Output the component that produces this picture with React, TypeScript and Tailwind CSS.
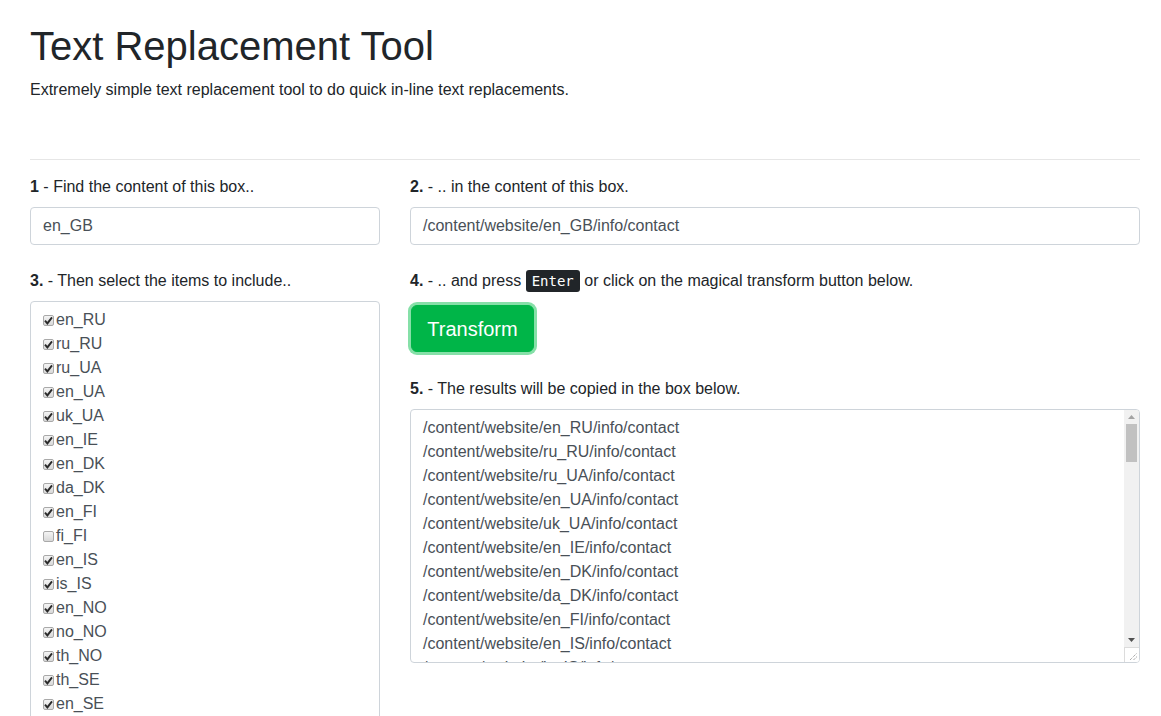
import React from "react";

const locales: { code: string; checked: boolean }[] = [
  { code: "en_RU", checked: true },
  { code: "ru_RU", checked: true },
  { code: "ru_UA", checked: true },
  { code: "en_UA", checked: true },
  { code: "uk_UA", checked: true },
  { code: "en_IE", checked: true },
  { code: "en_DK", checked: true },
  { code: "da_DK", checked: true },
  { code: "en_FI", checked: true },
  { code: "fi_FI", checked: false },
  { code: "en_IS", checked: true },
  { code: "is_IS", checked: true },
  { code: "en_NO", checked: true },
  { code: "no_NO", checked: true },
  { code: "th_NO", checked: true },
  { code: "th_SE", checked: true },
  { code: "en_SE", checked: true },
  { code: "sv_SE", checked: true },
];

const template = "/content/website/en_GB/info/contact";

function Check({ on }: { on: boolean }) {
  return (
    <span className="mr-[2px] inline-flex h-[11px] w-[11px] shrink-0 items-center justify-center rounded-[2px] border border-[#a9a9a9] bg-gradient-to-b from-[#f4f4f4] to-[#d8d8d8]">
      {on && (
        <svg width="9" height="9" viewBox="0 0 9 9">
          <path d="M1 4.6 L3.4 7.4 L8 1.4" fill="none" stroke="#2a2a2a" strokeWidth="1.9" />
        </svg>
      )}
    </span>
  );
}

function Label({ num, children }: { num: string; children: React.ReactNode }) {
  return (
    <div className="h-[24px] leading-[24px]">
      <b>{num}</b> {children}
    </div>
  );
}

export default function App() {
  const results = locales.filter((l) => l.checked).map((l) => template.replace("en_GB", l.code));

  return (
    <div className="min-h-[716px] bg-white font-['Liberation_Sans',Arial,sans-serif] text-[16px] text-[#212529]">
      <div className="ml-[30px] w-[1110px] pt-[22px]">
        <h1 className="text-[40px] font-normal leading-[48px]">Text Replacement Tool</h1>
        <p className="mt-[8px] leading-[24px]">Extremely simple text replacement tool to do quick in-line text replacements.</p>
        <hr className="mt-[57px] border-t border-[#e6e6e6]" />

        <div className="mt-[15px] flex gap-[30px]">
          <div className="w-[350px] shrink-0">
            <Label num="1">- Find the content of this box..</Label>
            <div className="mt-[8px] flex h-[38px] items-center rounded-[4px] border border-[#ced4da] px-[12px] text-[#495057]">
              en_GB
            </div>
            <div className="mt-[24px]">
              <Label num="3.">- Then select the items to include..</Label>
            </div>
            <div className="mt-[8px] h-[440px] overflow-hidden rounded-[4px] border border-[#ced4da] px-[12px] pt-[6px]">
              {locales.map((l) => (
                <div key={l.code} className="flex h-[24px] items-center leading-[24px] text-[#495057]">
                  <Check on={l.checked} />
                  {l.code}
                </div>
              ))}
            </div>
          </div>

          <div className="w-[730px] shrink-0">
            <Label num="2.">- .. in the content of this box.</Label>
            <div className="mt-[8px] flex h-[38px] items-center rounded-[4px] border border-[#ced4da] px-[12px] text-[#495057]">
              {template}
            </div>
            <div className="mt-[24px]">
              <Label num="4.">
                - .. and press{" "}
                <kbd className="rounded-[3px] bg-[#212529] px-[6px] py-[3px] font-['DejaVu_Sans_Mono',monospace] text-[14px] text-white">
                  Enter
                </kbd>{" "}
                or click on the magical transform button below.
              </Label>
            </div>
            <button className="ml-[1px] mt-[12px] h-[47px] w-[123px] rounded-[6px] border border-[#00b548] bg-[#00b548] text-[20px] text-white shadow-[0_0_0_3px_#86e0a8]">
              Transform
            </button>
            <div className="mt-[25px]">
              <Label num="5.">- The results will be copied in the box below.</Label>
            </div>
            <div className="mt-[8px] flex h-[254px] overflow-hidden rounded-[4px] border border-[#ced4da]">
              <div className="flex-1 overflow-hidden px-[12px] pt-[6px] text-[#495057]">
                {results.map((r) => (
                  <div key={r} className="h-[24px] whitespace-nowrap leading-[24px]">
                    {r}
                  </div>
                ))}
              </div>
              <div className="flex w-[15px] shrink-0 flex-col bg-[#f1f1f1]">
                <div className="flex h-[14px] items-center justify-center">
                  <svg width="7" height="4" viewBox="0 0 7 4">
                    <path d="M0 4 L3.5 0 L7 4 Z" fill="#a3a3a3" />
                  </svg>
                </div>
                <div className="mx-[2px] h-[38px] bg-[#c1c1c1]" />
                <div className="flex-1" />
                <div className="flex h-[14px] items-center justify-center">
                  <svg width="7" height="4" viewBox="0 0 7 4">
                    <path d="M0 0 L7 0 L3.5 4 Z" fill="#505050" />
                  </svg>
                </div>
                <div className="flex h-[15px] items-end justify-end border-l border-t border-[#dcdcdc] bg-white p-[1px]">
                  <svg width="9" height="9" viewBox="0 0 9 9">
                    <path d="M1 8 L8 1 M4.5 8 L8 4.5" stroke="#888" strokeWidth="1" strokeDasharray="1 1" />
                  </svg>
                </div>
              </div>
            </div>
          </div>
        </div>
      </div>
    </div>
  );
}
